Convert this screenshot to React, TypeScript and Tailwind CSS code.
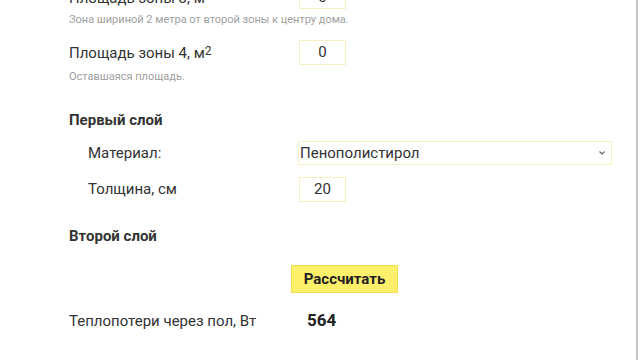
import React from "react";

const box = "border border-[#f7f0c2] bg-white flex items-center justify-center text-[15px] text-[#333] h-[25px] w-[47px]";

export default function App() {
  return (
    <div className="w-[640px] h-[360px] overflow-hidden bg-white flex" style={{ fontFamily: "Roboto, 'Noto Sans', sans-serif" }}>
      <div className="flex-1 pl-[69px] text-[#333]">
        <div className="flex items-center h-[25px] mt-[-16px]">
          <div className="w-[230px] text-[15px] leading-[20px] relative top-[1px]">Площадь зоны 3, м<sup className="text-[12px] relative top-[-3px]">2</sup></div>
          <div className={box}><span className="relative top-[1px]">0</span></div>
        </div>
        <div className="mt-[4px] text-[11px] leading-[14px] text-[#a0a0a0]">Зона шириной 2 метра от второй зоны к центру дома.</div>
        <div className="flex items-center h-[25px] mt-[13px]">
          <div className="w-[230px] text-[15px] leading-[20px]">Площадь зоны 4, м<sup className="text-[12px] relative top-[-3px]">2</sup></div>
          <div className={box}>0</div>
        </div>
        <div className="mt-[5px] text-[11px] leading-[14px] text-[#a0a0a0]">Оставшаяся площадь.</div>
        <div className="mt-[26px] text-[15px] leading-[20px] font-bold">Первый слой</div>
        <div className="flex items-center h-[24px] mt-[11px]">
          <div className="w-[210px] ml-[19px] text-[15px]">Материал:</div>
          <div className="w-[314px] h-[24px] border border-[#f7f0c2] flex items-center justify-between pl-[1px] pr-[5px] text-[15px]">
            <span>Пенополистирол</span>
            <svg width="8" height="8" viewBox="0 0 8 8"><path d="M1.5 2.5 L4 5 L6.5 2.5" fill="none" stroke="#666" strokeWidth="1.2" /></svg>
          </div>
        </div>
        <div className="flex items-center h-[25px] mt-[12px]">
          <div className="w-[211px] ml-[19px] text-[15px]">Толщина, см</div>
          <div className={box}>20</div>
        </div>
        <div className="mt-[24px] text-[15px] leading-[20px] font-bold">Второй слой</div>
        <div className="mt-[19px] ml-[222px]">
          <button className="h-[28px] w-[107px] bg-[#fff06b] border border-[#f2de4e] text-[15px] font-bold text-[#222] flex items-center justify-center">Рассчитать</button>
        </div>
        <div className="flex items-center h-[20px] mt-[18px]">
          <div className="w-[238px] text-[15px]">Теплопотери через пол, Вт</div>
          <div className="text-[17px] font-bold text-[#222]">564</div>
        </div>
      </div>
      <div className="w-[2px] bg-[#c6c6c6]" />
      <div className="w-[2px] bg-white" />
    </div>
  );
}
